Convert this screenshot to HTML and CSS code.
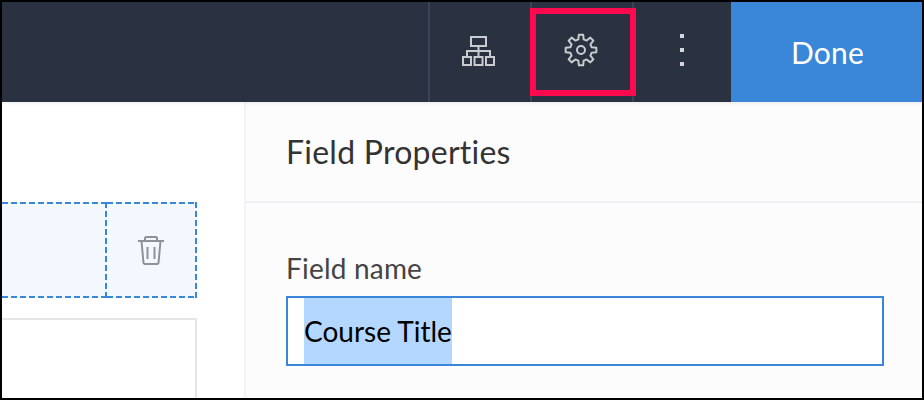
FILE: index.html
```html
<!DOCTYPE html>
<html lang="en">
<head>
    <meta charset="UTF-8">
    <meta name="viewport" content="width=device-width, initial-scale=1.0">
    <title>Field Properties</title>
    <link rel="stylesheet" href="styles.css">
</head>
<body>
    <div class="frame">
        <header class="topbar">
            <div class="tool tool-first">
                <svg class="icon" width="33" height="30" viewBox="0 0 33 30" fill="none" stroke="#c9cbce" stroke-width="2">
                    <rect x="9" y="1" width="15" height="9"/>
                    <path d="M16.500 10v11M5 21v-6h23v6"/>
                    <rect x="1" y="21" width="8" height="8"/>
                    <rect x="12.500" y="21" width="8" height="8"/>
                    <rect x="24" y="21" width="8" height="8"/>
                </svg>
            </div>
            <div class="tool tool-active">
                <svg class="icon" width="34" height="34" viewBox="-17 -17 34 34" fill="none" stroke="#c9cbce" stroke-width="2" stroke-linejoin="round">
                    <path d="M2.160 -15.350L2.660 -10.670L5.670 -9.430L9.330 -12.380L12.380 -9.330L9.430 -5.670L10.670 -2.660L15.350 -2.160L15.350 2.160L10.670 2.660L9.430 5.670L12.380 9.330L9.330 12.380L5.670 9.430L2.660 10.670L2.160 15.350L-2.160 15.350L-2.660 10.670L-5.670 9.430L-9.330 12.380L-12.380 9.330L-9.430 5.670L-10.670 2.660L-15.350 2.160L-15.350 -2.160L-10.670 -2.660L-9.430 -5.670L-12.380 -9.330L-9.330 -12.380L-5.670 -9.430L-2.660 -10.670L-2.160 -15.350Z"/>
                    <circle cx="0" cy="0" r="4"/>
                </svg>
            </div>
            <div class="tool tool-more">
                <span class="dot"></span>
                <span class="dot"></span>
                <span class="dot"></span>
            </div>
            <button class="done">Done</button>
        </header>
        <div class="main">
            <section class="canvas">
                <div class="row-selected">
                    <div class="cell-field dashed"></div>
                    <div class="cell-delete dashed">
                        <svg width="26" height="29" viewBox="0 0 26 29" fill="none" stroke="#8d9299" stroke-width="2">
                            <path d="M0 5h26M7 5V2l1-1h10l1 1v3M3.500 5l2 22 1 1h13l1-1 2-22"/>
                            <path d="M9.500 11v12M16.500 11v12"/>
                        </svg>
                    </div>
                </div>
                <div class="row-next"></div>
            </section>
            <aside class="props">
                <h2 class="props-title">Field Properties</h2>
                <div class="props-body">
                    <label class="field-label">Field name</label>
                    <div class="field-input"><span class="selected">Course Title</span></div>
                </div>
            </aside>
        </div>
    </div>
</body>
</html>
```

FILE: styles.css
```css
* {
    box-sizing: border-box;
}

html, body {
    margin: 0;
    padding: 0;
}

body {
    width: 924px;
    height: 400px;
    overflow: hidden;
    font-family: Lato, sans-serif;
    font-variant-ligatures: none;
}

.frame {
    width: 924px;
    height: 400px;
    border: 2px solid #000;
    display: flex;
    flex-direction: column;
    overflow: hidden;
    background-color: #fff;
}

.topbar {
    position: relative;
    height: 100px;
    background-color: #2a3140;
    box-shadow: 0 1px 3px rgba(0, 0, 0, 0.08);
    display: flex;
    justify-content: flex-end;
    flex-shrink: 0;
}

.tool {
    width: 102px;
    display: flex;
    align-items: center;
    justify-content: center;
    border-left: 2px solid #3b4457;
}

.tool-first {
    padding: 0 3px 2px 0;
}

.tool-active {
    position: relative;
    padding: 0 2px 4px 0;
}

.tool-active::after {
    content: "";
    box-sizing: border-box;
    position: absolute;
    left: -2px;
    top: 6px;
    width: 106px;
    height: 88px;
    border: 6px solid #ff0a50;
}

.tool-more {
    width: 99px;
    flex-direction: column;
    gap: 10px;
    padding: 0 2px 4px 0;
}

.dot {
    width: 4px;
    height: 4px;
    background-color: #d5d6d8;
}

.done {
    width: 191px;
    border: none;
    background-color: #3a87d9;
    color: #fff;
    font-family: Lato, sans-serif;
    font-size: 30px;
    letter-spacing: 0.2px;
    padding: 0 0 0 2px;
}

.main {
    flex: 1;
    display: flex;
    min-height: 0;
}

.canvas {
    width: 242px;
    padding-top: 100px;
    flex-shrink: 0;
}

.row-selected {
    width: 195px;
    height: 96px;
    display: flex;
}

/* border dashes are longer than the browser's own dashed style */
.dashed {
    background-color: #f3f8fe;
    background-image:
        repeating-linear-gradient(90deg, #3a87d9 0 6px, transparent 6px 9px),
        repeating-linear-gradient(90deg, #3a87d9 0 6px, transparent 6px 9px),
        repeating-linear-gradient(180deg, #3a87d9 0 6px, transparent 6px 9px);
    background-size: 100% 2px, 100% 2px, 2px 100%;
    background-position: 0 0, 0 100%, 100% 0;
    background-repeat: no-repeat;
}

.cell-field {
    flex: 1;
}

.cell-delete {
    width: 90px;
    padding-right: 2px;
    display: flex;
    align-items: center;
    justify-content: center;
}

.row-next {
    width: 195px;
    height: 90px;
    margin-top: 20px;
    border: 2px solid #e6e6e6;
    border-left: none;
    background-color: #fff;
}

.props {
    flex: 1;
    background-color: #fcfcfc;
    border-left: 2px solid #f3f3f5;
}

.props-title {
    margin: 0;
    height: 101px;
    padding-left: 40px;
    display: flex;
    align-items: center;
    font-size: 32px;
    font-weight: 400;
    letter-spacing: 0.25px;
    color: #333;
    border-bottom: 2px solid #f0f0f2;
}

.props-body {
    padding: 48px 38px 0 40px;
}

.field-label {
    display: block;
    font-size: 28px;
    line-height: 34px;
    letter-spacing: 0.2px;
    color: #444;
    margin-bottom: 11px;
}

.field-input {
    height: 70px;
    background-color: #fff;
    border: 2px solid #3a87d9;
    padding-left: 16px;
    display: flex;
    font-size: 28px;
    color: #000;
}

.selected {
    background-color: #b3d7ff;
    display: flex;
    align-items: center;
}
```
